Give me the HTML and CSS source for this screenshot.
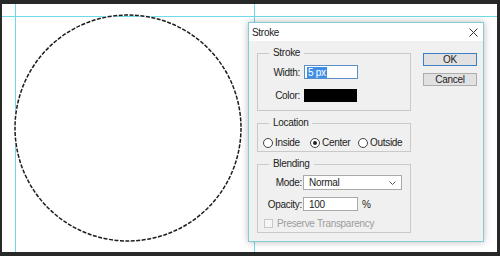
FILE: index.html
```html
<!DOCTYPE html>
<html>
<head>
    <title>Stroke</title>
    <link rel="stylesheet" href="styles.css">
</head>
<body>
    <div class="canvas">
        <div class="guide guide-v" style="left: 13px"></div>
        <div class="guide guide-v" style="left: 252px"></div>
        <div class="guide guide-h" style="top: 12px"></div>

        <svg class="shape" width="495" height="248" viewBox="0 0 495 248">
            <circle cx="126" cy="124" r="113" fill="none" stroke="#fff" stroke-width="1.5"/>
            <circle cx="126" cy="124" r="113" fill="none" stroke="#1c1c1c" stroke-width="1.5" stroke-dasharray="4 1.5"/>
        </svg>

        <div class="dialog">
            <div class="titlebar">
                <span>Stroke</span>
                <svg class="close" width="9" height="9" viewBox="0 0 9 9">
                    <path d="M0.5 0.5 L8.5 8.5 M8.5 0.5 L0.5 8.5" stroke="#333" stroke-width="1"/>
                </svg>
            </div>
            <div class="body">
                <div class="groups">
                    <fieldset class="group g-stroke">
                        <legend>Stroke</legend>
                        <div class="row">
                            <label>Width:</label>
                            <div class="field f-width"><span class="sel">5 px</span></div>
                        </div>
                        <div class="row">
                            <label>Color:</label>
                            <div class="swatch"></div>
                        </div>
                    </fieldset>

                    <fieldset class="group g-location">
                        <legend>Location</legend>
                        <div class="radios">
                            <span class="radio"><i></i>Inside</span>
                            <span class="radio on"><i></i>Center</span>
                            <span class="radio"><i></i>Outside</span>
                        </div>
                    </fieldset>

                    <fieldset class="group g-blend">
                        <legend>Blending</legend>
                        <div class="row r-mode">
                            <label>Mode:</label>
                            <div class="field f-select">Normal
                                <svg width="7" height="4" viewBox="0 0 7 4"><path d="M0.5 0.5 L3.5 3.5 L6.5 0.5" fill="none" stroke="#555"/></svg>
                            </div>
                        </div>
                        <div class="row r-opacity">
                            <label>Opacity:</label>
                            <div class="field f-opacity">100</div>
                            <span class="unit">%</span>
                        </div>
                        <div class="check"><i></i>Preserve Transparency</div>
                    </fieldset>
                </div>

                <div class="buttons">
                    <button class="btn primary">OK</button>
                    <button class="btn">Cancel</button>
                </div>
            </div>
        </div>
    </div>
</body>
</html>
```

FILE: styles.css
```css
body {
    margin: 0;
    width: 500px;
    height: 256px;
    background-color: #282828;
    font-family: "Liberation Sans", Arial, sans-serif;
    font-size: 10px;
    letter-spacing: -0.3px;
    color: #222;
    overflow: hidden;
}

.canvas {
    position: relative;
    margin: 4px 3px 0 2px;
    width: 495px;
    height: 248px;
    background-color: #fff;
}

.guide {
    position: absolute;
    background-color: #6fdbe8;
}

.guide-v {
    top: 0;
    bottom: 0;
    width: 1px;
}

.guide-h {
    left: 0;
    right: 0;
    height: 1px;
}

.shape {
    position: absolute;
    left: 0;
    top: 0;
}

/* floating photoshop dialog */
.dialog {
    position: absolute;
    left: 246px;
    top: 18px;
    width: 234px;
    height: 218px;
    background-color: #f0f0f0;
    border: 1px solid #86cbd4;
    box-shadow: 0 0 7px rgba(0, 0, 0, 0.28);
}

.titlebar {
    height: 18px;
    background-color: #fff;
    display: flex;
    align-items: center;
    justify-content: space-between;
    padding: 0 5px 0 3px;
}

.body {
    display: flex;
    gap: 12px;
    padding: 7px 0 0 8px;
}

.groups {
    display: flex;
    flex-direction: column;
    gap: 7px;
    width: 154px;
}

.group {
    margin: 0;
    padding: 0;
    border: 1px solid #c9c9c9;
    box-sizing: border-box;
    min-width: 0;
}

.group legend {
    margin-left: 11px;
    padding: 0 4px;
    line-height: 10px;
    height: 10px;
}

.g-stroke {
    height: 63px;
    padding-top: 7px;
}

.g-location {
    height: 34px;
    padding-top: 9px;
}

.g-blend {
    height: 74px;
    padding-top: 6px;
}

.row {
    display: flex;
    align-items: center;
    gap: 4px;
    height: 14px;
}

.row label {
    width: 42px;
    text-align: right;
}

.g-stroke .row + .row {
    margin-top: 9px;
}

.field {
    box-sizing: border-box;
    background-color: #fff;
    border: 1px solid #a9a9a9;
    height: 14px;
    display: flex;
    align-items: center;
    padding-left: 2px;
}

.f-width {
    width: 54px;
    border-color: #5e90c8;
}

.sel {
    background-color: #3f8fe6;
    color: #fff;
    padding: 0 1px;
    line-height: 11px;
}

.swatch {
    width: 53px;
    height: 13px;
    background-color: #000;
}

.radios {
    display: flex;
    padding-left: 5px;
}

.radio {
    display: flex;
    align-items: center;
    gap: 2px;
    width: 47px;
}

.radio + .radio {
    width: 48px;
}

.radio i {
    box-sizing: border-box;
    width: 10px;
    height: 10px;
    border: 1px solid #444;
    border-radius: 50%;
    background-color: #fff;
    position: relative;
}

.radio.on i::after {
    content: "";
    position: absolute;
    left: 2px;
    top: 2px;
    width: 4px;
    height: 4px;
    border-radius: 50%;
    background-color: #222;
}

.r-mode {
    height: 15px;
}

.r-mode label,
.r-opacity label {
    width: 44px;
    margin-right: -3px;
}

.f-select {
    width: 99px;
    height: 15px;
    padding: 0 5px;
    justify-content: space-between;
}

.r-opacity {
    margin-top: 7px;
}

.f-opacity {
    width: 55px;
    padding-left: 5px;
}

.check {
    display: flex;
    align-items: center;
    gap: 4px;
    margin: 8px 0 0 6px;
    height: 9px;
    color: #9c9c9c;
}

.check i {
    box-sizing: border-box;
    width: 9px;
    height: 9px;
    border: 1px solid #c8c8c8;
    background-color: #f6f6f6;
}

.buttons {
    display: flex;
    flex-direction: column;
    gap: 7px;
    margin-top: 5px;
}

.btn {
    width: 54px;
    height: 13px;
    padding: 0;
    font-family: inherit;
    font-size: 10px;
    letter-spacing: -0.3px;
    line-height: 11px;
    color: #222;
    background-color: #e1e1e1;
    border: 1px solid #adadad;
}

.btn.primary {
    border-color: #3c7fc7;
}
```
